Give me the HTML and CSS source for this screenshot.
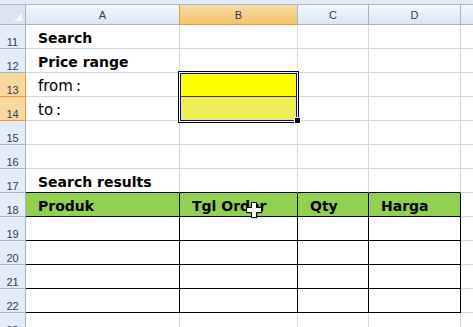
FILE: index.html
```html
<!DOCTYPE html>
<html lang="en">
<head>
    <meta charset="UTF-8">
    <title>Search sheet</title>
    <link rel="stylesheet" href="styles.css">
</head>
<body>

    <div class="topbar"></div>

    <div class="sheet">
        <!-- column headings -->
        <div class="corner"><span class="tri"></span></div>
        <div class="colhead sel-left">A</div>
        <div class="colhead sel">B</div>
        <div class="colhead">C</div>
        <div class="colhead">D</div>
        <div class="colhead"></div>

        <div class="rowhead">11</div>
        <div class="cell bold">Search</div>
        <div class="cell"></div><div class="cell"></div><div class="cell"></div><div class="cell"></div>

        <div class="rowhead">12</div>
        <div class="cell bold">Price range</div>
        <div class="cell"></div><div class="cell"></div><div class="cell"></div><div class="cell"></div>

        <div class="rowhead sel">13</div>
        <div class="cell">from<span class="colon">:</span></div>
        <div class="cell input-from"></div><div class="cell"></div><div class="cell"></div><div class="cell"></div>

        <div class="rowhead sel">14</div>
        <div class="cell">to<span class="colon">:</span></div>
        <div class="cell input-to"></div><div class="cell"></div><div class="cell"></div><div class="cell"></div>

        <div class="rowhead">15</div>
        <div class="cell"></div><div class="cell"></div><div class="cell"></div><div class="cell"></div><div class="cell"></div>

        <div class="rowhead">16</div>
        <div class="cell"></div><div class="cell"></div><div class="cell"></div><div class="cell"></div><div class="cell"></div>

        <div class="rowhead">17</div>
        <div class="cell bold above">Search results</div>
        <div class="cell above"></div><div class="cell above"></div><div class="cell above"></div><div class="cell"></div>

        <div class="rowhead">18</div>
        <div class="cell bold tbl head">Produk</div>
        <div class="cell bold tbl head">Tgl Order</div>
        <div class="cell bold tbl head">Qty</div>
        <div class="cell bold tbl head">Harga</div>
        <div class="cell"></div>

        <div class="rowhead">19</div>
        <div class="cell tbl"></div><div class="cell tbl"></div><div class="cell tbl"></div><div class="cell tbl"></div><div class="cell"></div>

        <div class="rowhead">20</div>
        <div class="cell tbl"></div><div class="cell tbl"></div><div class="cell tbl"></div><div class="cell tbl"></div><div class="cell"></div>

        <div class="rowhead">21</div>
        <div class="cell tbl"></div><div class="cell tbl"></div><div class="cell tbl"></div><div class="cell tbl"></div><div class="cell"></div>

        <div class="rowhead">22</div>
        <div class="cell tbl"></div><div class="cell tbl"></div><div class="cell tbl"></div><div class="cell tbl"></div><div class="cell"></div>

        <div class="rowhead">23</div>
        <div class="cell"></div><div class="cell"></div><div class="cell"></div><div class="cell"></div><div class="cell"></div>
    </div>

    <!-- selection frame over B13:B14 -->
    <div class="selection"></div>
    <div class="fill-handle"></div>

    <!-- mouse cursor -->
    <svg class="cursor" width="18" height="19" viewBox="0 0 18 19">
        <path d="M6.5 2.5h5v5h5v5h-5v5h-5v-5h-5v-5h5z" fill="#000" opacity="0.35"/>
        <path d="M5.5 1.5h5v5h5v5h-5v5h-5v-5h-5v-5h5z" fill="#fff" stroke="#000" stroke-width="1"/>
    </svg>

</body>
</html>
```

FILE: styles.css
```css
body {
    margin: 0;
    padding: 0;
    background-color: #fff;
    font-family: "DejaVu Sans", Verdana, sans-serif;
    overflow: hidden;
    position: relative;
    height: 327px;
}
.topbar {
    height: 4px;
    background-color: #e3ebf6;
    border-bottom: 1px solid #a3b9d4;
}
.sheet {
    display: grid;
    grid-template-columns: 26px 154px 118px 71px 92px 1fr;
    grid-template-rows: 20px;
    grid-auto-rows: 24px;
}
.sheet > div {
    box-sizing: border-box;
    border-right: 1px solid #d0d7e5;
    border-bottom: 1px solid #d0d7e5;
}
.corner {
    position: relative;
    background-color: #dbe5f2;
    border-right: 1px solid #9eb6ce !important;
    border-bottom: 1px solid #9eb6ce !important;
}
.corner .tri {
    position: absolute;
    right: 3px;
    bottom: 3px;
    width: 0;
    height: 0;
    border-left: 8px solid transparent;
    border-bottom: 8px solid #f4f7fb;
}
.colhead {
    background: linear-gradient(#f4f7fb, #dde6f1);
    border-right: 1px solid #9eb6ce !important;
    border-bottom: 1px solid #9eb6ce !important;
    font-family: "Liberation Sans", Arial, sans-serif;
    font-size: 11px;
    color: #27405c;
    display: flex;
    align-items: center;
    justify-content: center;
}
.colhead.sel {
    background: linear-gradient(#f9dca4, #f3c468);
    border-bottom-color: #f29436 !important;
    border-right-color: #9eb6ce !important;
}
.colhead.sel-left {
    border-right-color: #f29436 !important;
}
.rowhead {
    background-color: #e4ecf7;
    border-right: 1px solid #9eb6ce !important;
    border-bottom: 1px solid #9eb6ce !important;
    font-family: "Liberation Sans", Arial, sans-serif;
    font-size: 11px;
    color: #27405c;
    display: flex;
    align-items: flex-end;
    justify-content: center;
    line-height: 12px;
}
.rowhead.sel {
    background-color: #f9d99b;
    border-right-color: #f29436 !important;
    border-bottom-color: #f29436 !important;
}
.cell {
    display: flex;
    align-items: flex-end;
    padding: 0 0 2px 12px;
    font-size: 15px;
    line-height: 16px;
    color: #000;
    white-space: nowrap;
}
.colon {
    margin-left: 3px;
}
.bold {
    font-weight: bold;
    font-size: 14px;
}
.above {
    border-bottom-color: #000 !important;
}
.tbl {
    border-right-color: #000 !important;
    border-bottom-color: #000 !important;
}
.head {
    background-color: #92d050;
}
.input-from {
    background-color: #ffff00;
    border-bottom-color: #404040 !important;
}
.input-to {
    background-color: #f1ee55;
}
.selection {
    position: absolute;
    left: 178px;
    top: 71px;
    width: 121px;
    height: 52px;
    box-sizing: border-box;
    border: 1px solid #000;
    box-shadow: inset 0 0 0 1px #fff, inset 0 0 0 2px #0000ff;
}
.fill-handle {
    position: absolute;
    left: 295px;
    top: 118px;
    width: 5px;
    height: 5px;
    background-color: #000;
    outline: 1px solid #fff;
}
.cursor {
    position: absolute;
    left: 246px;
    top: 201px;
}
```
